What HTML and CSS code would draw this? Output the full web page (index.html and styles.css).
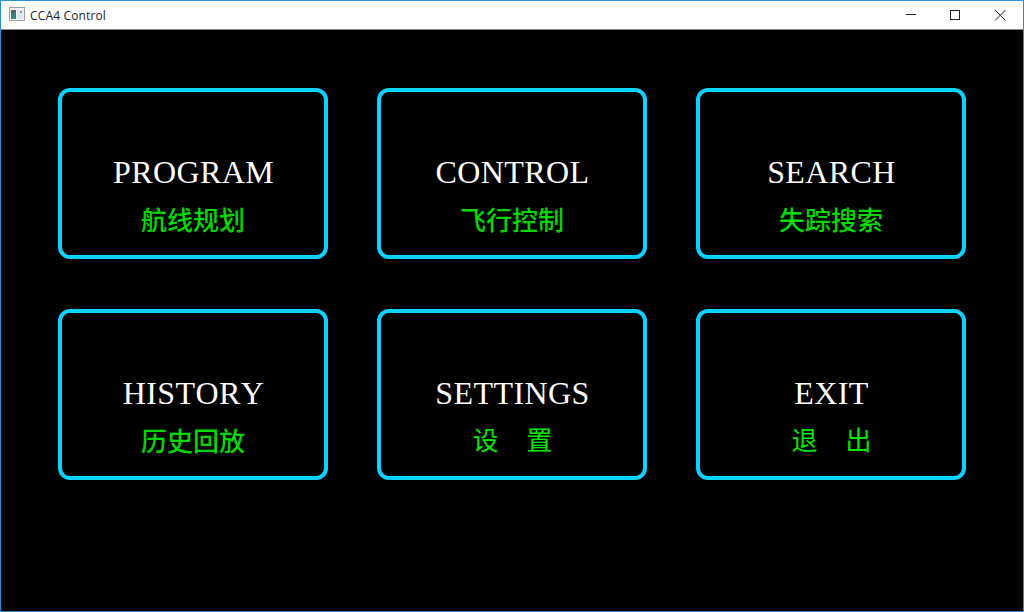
FILE: index.html
```html
<!DOCTYPE html>
<html lang="en">
<head>
<meta charset="UTF-8">
<meta name="viewport" content="width=device-width, initial-scale=1.0">
<title>CCA4 Control</title>
<link rel="stylesheet" href="styles.css">
</head>
<body>
<div class="window">
    <div class="titlebar">
        <svg class="app-icon" width="16" height="16" viewBox="0 0 16 16">
            <rect x="0.5" y="0.5" width="15" height="13" fill="#f0f0f0" stroke="#a0a0a0"/>
            <rect x="2" y="3" width="5" height="9" fill="#3f7f86"/>
            <rect x="2" y="3" width="5" height="3" fill="#55606e"/>
            <rect x="8" y="3" width="6" height="9" fill="#dfe5e8"/>
            <rect x="11" y="4" width="2" height="2" fill="#9aa3ab"/>
        </svg>
        <span class="title">CCA4 Control</span>
        <div class="window-buttons">
            <svg width="46" height="28" viewBox="0 0 46 28"><path d="M21 13.5h10" stroke="#222" fill="none"/></svg>
            <svg width="46" height="28" viewBox="0 0 46 28"><rect x="19.5" y="9.5" width="9" height="9" stroke="#222" fill="none"/></svg>
            <svg width="46" height="28" viewBox="0 0 46 28"><path d="M18 9l10.5 10.5M28.500 9L18 19.500" stroke="#222" fill="none"/></svg>
        </div>
    </div>
    <div class="menu-grid">
        <button class="menu-btn"><span class="en">PROGRAM</span><span class="cn">航线规划</span></button>
        <button class="menu-btn"><span class="en">CONTROL</span><span class="cn">飞行控制</span></button>
        <button class="menu-btn"><span class="en">SEARCH</span><span class="cn">失踪搜索</span></button>
        <button class="menu-btn"><span class="en">HISTORY</span><span class="cn">历史回放</span></button>
        <button class="menu-btn"><span class="en">SETTINGS</span><span class="cn cn-wide">设　置</span></button>
        <button class="menu-btn"><span class="en">EXIT</span><span class="cn cn-wide">退　出</span></button>
    </div>
</div>
</body>
</html>
```

FILE: styles.css
```css
html, body {
    margin: 0;
    height: 100%;
    overflow: hidden;
}
.window {
    box-sizing: border-box;
    width: 1024px;
    height: 612px;
    border: 1px solid #2b8fdc;
    background-color: #000;
    display: flex;
    flex-direction: column;
}
.titlebar {
    box-sizing: border-box;
    height: 29px;
    background-color: #fff;
    border-bottom: 1px solid #8a8a8a;
    display: flex;
    align-items: center;
    color: #222;
    font-family: "Open Sans", "Noto Sans", sans-serif;
    font-size: 12px;
    letter-spacing: 0.15px;
    flex-shrink: 0;
}
.app-icon {
    margin-left: 8px;
    margin-right: 5px;
}
.window-buttons {
    margin-left: auto;
    display: flex;
}
.window-buttons svg {
    display: block;
}
.menu-grid {
    display: grid;
    grid-template-columns: repeat(3, 270px);
    grid-auto-rows: 171px;
    column-gap: 49px;
    row-gap: 50px;
    padding: 58px 0 0 57px;
}
.menu-btn {
    box-sizing: border-box;
    background-color: #000;
    border: 4px solid #0cd2ff;
    border-radius: 12px;
    padding: 52px 0 0;
    display: flex;
    flex-direction: column;
    align-items: center;
    justify-content: flex-start;
}
.en {
    color: #fff;
    font-family: "Liberation Serif", serif;
    font-size: 32px;
    line-height: 56px;
    font-kerning: none;
    letter-spacing: 0.4px;
    padding-left: 1px;
}
.cn {
    color: #00d800;
    font-family: "Noto Sans CJK SC", sans-serif;
    font-size: 26px;
    font-weight: 500;
    line-height: 38px;
}
.cn-wide {
    color: #00e800;
    font-weight: 400;
    letter-spacing: 1px;
    line-height: 36px;
    padding-left: 2px;
}
```
